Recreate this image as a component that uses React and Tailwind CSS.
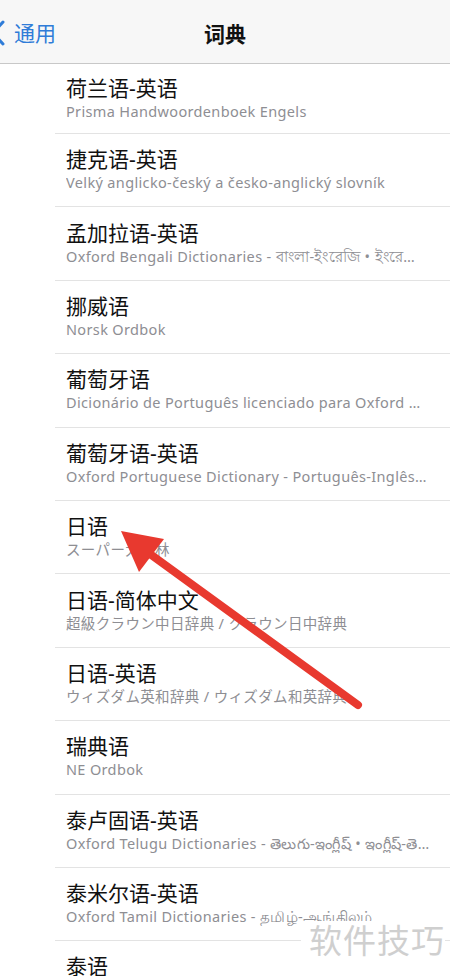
const rows = [
  { title: '荷兰语-英语', sub: 'Prisma Handwoordenboek Engels' },
  { title: '捷克语-英语', sub: 'Velký anglicko-český a česko-anglický slovník' },
  { title: '孟加拉语-英语', sub: 'Oxford Bengali Dictionaries - বাংলা-ইংরেজি • ইংরেজি-বাংলা' },
  { title: '挪威语', sub: 'Norsk Ordbok' },
  { title: '葡萄牙语', sub: 'Dicionário de Português licenciado para Oxford University Press' },
  { title: '葡萄牙语-英语', sub: 'Oxford Portuguese Dictionary - Português-Inglês • Inglês-Português' },
  { title: '日语', sub: 'スーパー大辞林' },
  { title: '日语-简体中文', sub: '超級クラウン中日辞典 / クラウン日中辞典' },
  { title: '日语-英语', sub: 'ウィズダム英和辞典 / ウィズダム和英辞典' },
  { title: '瑞典语', sub: 'NE Ordbok' },
  { title: '泰卢固语-英语', sub: 'Oxford Telugu Dictionaries - తెలుగు-ఇంగ్లీష్ • ఇంగ్లీష్-తెలుగు' },
  { title: '泰米尔语-英语', sub: 'Oxford Tamil Dictionaries - தமிழ்-ஆங்கிலம்' },
  { title: '泰语', sub: 'Thai Dictionary' },
]

const font = { fontFamily: '"Noto Sans", "Noto Sans CJK SC", sans-serif' }

function Row({ title, sub, first }) {
  return (
    <div className={`pl-[55px] ${first ? 'h-[70px]' : 'h-[73.4px]'}`}>
      <div className="h-full border-b border-[#e3e3e3] pl-[11px] pr-[20px] flex flex-col justify-center">
        <div className="text-[21px] leading-[26px] text-[#111] mt-[-2px]">{title}</div>
        <div className="text-[14.5px] tracking-[0.35px] leading-[20px] text-[#8e8e93] truncate">{sub}</div>
      </div>
    </div>
  )
}

export default function App() {
  return (
    <div className="relative w-[450px] h-[976px] overflow-hidden bg-white" style={font}>
      <div className="h-[64px] bg-[#f7f7f7] border-b border-[#c8c8c8] flex items-center relative">
        <div className="flex items-center text-[#2f7cd8] absolute left-[-10px] top-[20px]">
          <svg width="18" height="26" viewBox="0 0 18 26" fill="none">
            <path d="M13 2 L3 13 L13 24" stroke="#2f7cd8" strokeWidth="3" strokeLinecap="round" strokeLinejoin="round" />
          </svg>
          <span className="ml-[6px] text-[21px] leading-[26px]">通用</span>
        </div>
        <div className="w-full text-center text-[21px] font-bold text-[#111] leading-[26px] mt-[4px]">词典</div>
      </div>
      <div>
        {rows.map((r, i) => (
          <Row key={r.title} {...r} first={i === 0} />
        ))}
      </div>
      <svg className="absolute left-0 top-0 pointer-events-none" width="450" height="976">
        <line x1="150" y1="554" x2="358" y2="705" stroke="#e8392f" strokeWidth="8" strokeLinecap="round" />
        <polygon points="121,531 164,539 139,572" fill="#e8392f" />
      </svg>
      <div className="absolute right-[5px] top-[921px] text-[33px] leading-[40px] text-[#cfcfcf] tracking-[1px] bg-white pl-[8px]">
        软件技巧
      </div>
    </div>
  )
}
